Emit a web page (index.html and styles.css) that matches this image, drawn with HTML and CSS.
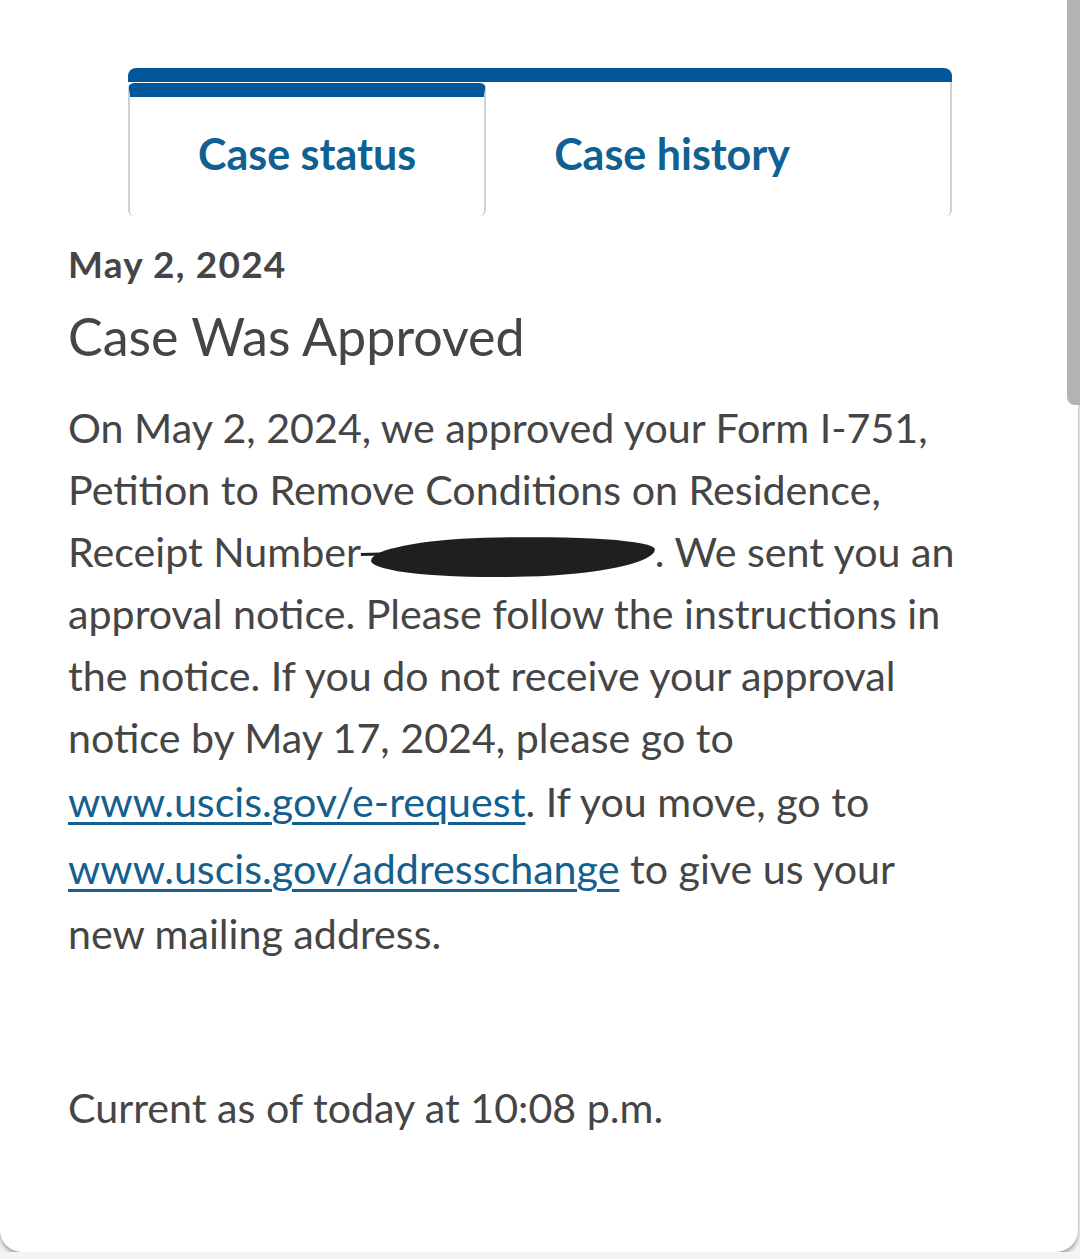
FILE: index.html
```html
<!DOCTYPE html>
<html lang="en">

<head>
    <meta charset="UTF-8">
    <meta name="viewport" content="width=device-width, initial-scale=1.0">
    <title>Case Status</title>
    <link rel="stylesheet" href="styles.css">
</head>

<body>
    <div class="scrollbar"></div>
    <div class="card">
        <div class="tabs">
            <a class="tab active" href="#status">Case status</a>
            <a class="tab" href="#history">Case history</a>
        </div>
        <div class="status">
            <h3 class="date">May 2, 2024</h3>
            <h2 class="title">Case Was Approved</h2>
            <p class="text">On May 2, 2024, we approved your Form I-751, Petition to Remove Conditions on Residence, Receipt Number <span class="redact"></span>. We sent you an approval notice. Please follow the instructions in the notice. If you do not receive your approval notice by May 17, 2024, please go to <a href="#">www.uscis.gov/e-request</a>. If you move, go to <a href="#">www.uscis.gov/addresschange</a> to give us your new mailing address.</p>
            <p class="updated">Current as of today at 10:08 p.m.</p>
        </div>
    </div>
</body>

</html>
```

FILE: styles.css
```css
html,
body {
    margin: 0;
    padding: 0;
    background-color: #f4f4f4;
}

body {
    font-family: Lato, "Noto Sans", sans-serif;
    color: #454545;
}

.card {
    width: 1078px;
    height: 1252px;
    box-sizing: border-box;
    padding: 68px 0 0 68px;
    background-color: #fff;
    border-radius: 0 0 22px 22px;
    box-shadow: 0 3px 4px rgba(0, 0, 0, 0.35);
}

.scrollbar {
    position: absolute;
    top: 0;
    right: 0;
    width: 13px;
    height: 405px;
    background-color: #b3b3b3;
    border-radius: 0 0 0 8px;
    z-index: 10;
}

/* tabs */
.tabs {
    display: flex;
    align-items: flex-start;
    width: 824px;
    margin-left: 60px;
    border-top: 14px solid #02569a;
    border-radius: 8px 8px 0 0;
}

.tab {
    display: block;
    box-sizing: border-box;
    height: 134px;
    padding: 47px 68px 0;
    font-size: 43px;
    font-weight: 700;
    line-height: 50px;
    color: #0e6192;
    text-decoration: none;
    border-right: 2px solid #d0d0d0;
    border-radius: 0 0 6px 6px;
}

.tab.active {
    height: 133px;
    margin-top: 1px;
    padding-top: 32px;
    border-top: 14px solid #02569a;
    border-left: 2px solid #d0d0d0;
    border-radius: 6px 6px 6px 6px;
}

.tab:last-child {
    flex: 1;
}

/* status */
.status {
    width: 895px;
}

.date {
    margin: 25px 0 0;
    font-size: 37px;
    font-weight: 700;
    letter-spacing: 1.2px;
    line-height: 46px;
}

.title {
    margin: 18px 0 0;
    font-size: 52px;
    font-weight: 400;
    line-height: 62px;
}

.text {
    margin: 29px 0 0;
    font-size: 41.2px;
    line-height: 62px;
}

.text a {
    display: inline-block;
    line-height: 67px;
    white-space: nowrap;
    color: #145f8e;
    text-decoration: underline;
    text-underline-offset: 5px;
    text-decoration-thickness: 3px;
}

.redact {
    position: relative;
    display: inline-block;
    width: 284px;
    height: 40px;
    background-color: #1f1f1f;
    border-radius: 40% 60% 45% 55% / 50% 40% 60% 50%;
    transform: rotate(-1.5deg);
    vertical-align: -10px;
}

.redact::before {
    content: '';
    position: absolute;
    left: -10px;
    top: 12px;
    width: 30px;
    height: 3px;
    background-color: #1f1f1f;
}

.updated {
    margin: 112px 0 0;
    font-size: 41.2px;
    line-height: 62px;
}
```
